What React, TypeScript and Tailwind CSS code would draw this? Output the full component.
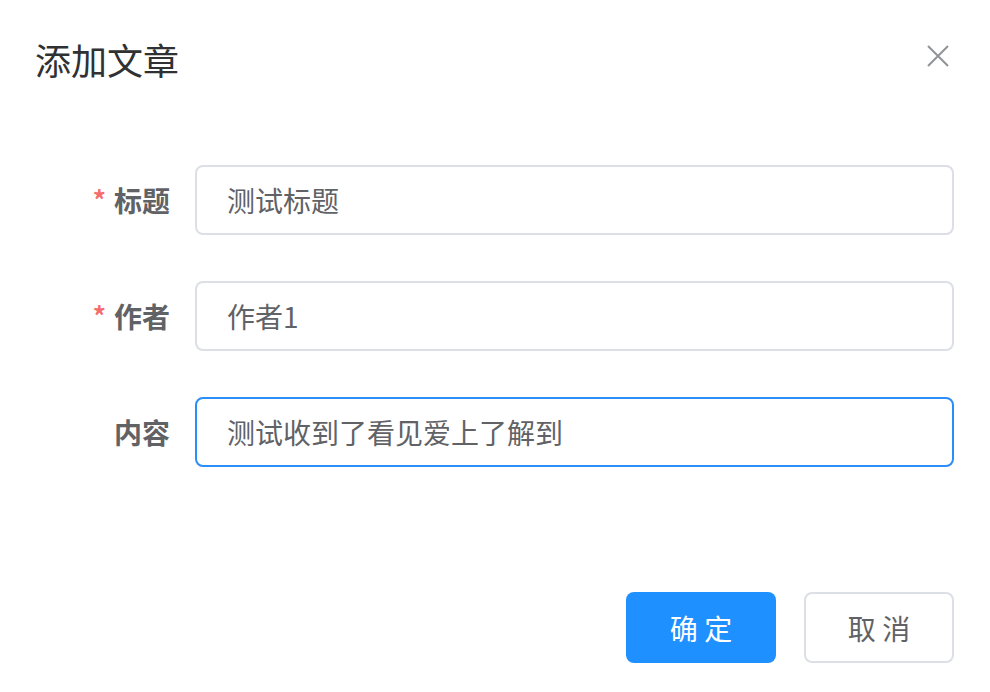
import { useState } from 'react';

const font = { fontFamily: '"Noto Sans CJK SC", "Noto Sans", sans-serif' };

interface Field {
  label: string;
  value: string;
  required?: boolean;
  focused?: boolean;
}

const fields: Field[] = [
  { label: '标题', value: '测试标题', required: true },
  { label: '作者', value: '作者1', required: true },
  { label: '内容', value: '测试收到了看见爱上了解到', focused: true },
];

const CloseIcon = () => (
  <svg width="22" height="22" viewBox="0 0 22 22" fill="none" stroke="#909399" strokeWidth="2">
    <path d="M1 1 L21 21 M21 1 L1 21" />
  </svg>
);

export default function App() {
  const [values, setValues] = useState(fields.map(f => f.value));

  return (
    <div className="w-[990px] h-[692px] bg-white flex flex-col" style={font}>
      {/* Header */}
      <div className="flex items-center justify-between pl-[35px] pr-[41px] pt-[36px] h-[82px]">
        <span className="text-[36px] leading-[46px] text-[#303133]">添加文章</span>
        <button className="mt-[-6px] flex items-center justify-center">
          <CloseIcon />
        </button>
      </div>

      {/* Form */}
      <div className="flex flex-col gap-[46px] mt-[83px] pr-[36px]">
        {fields.map((f, i) => (
          <div key={f.label} className="flex items-center">
            <label className="w-[195px] pr-[25px] flex justify-end items-center text-[28px] font-bold text-[#606266]">
              {f.required && <span className="text-[#f56c6c] text-[26px] mr-[8px] mt-[-4px]">*</span>}
              {f.label}
            </label>
            <input
              value={values[i]}
              onChange={e => setValues(v => v.map((x, j) => (j === i ? e.target.value : x)))}
              className={
                'flex-1 h-[70px] rounded-[8px] border-2 px-[30px] text-[28px] text-[#606266] outline-none ' +
                (f.focused ? 'border-[#2b8ef8]' : 'border-[#dcdfe6]')
              }
              style={font}
            />
          </div>
        ))}
      </div>

      {/* Footer */}
      <div className="flex justify-end gap-[28px] mt-[125px] pr-[36px]">
        <button className="w-[150px] h-[71px] rounded-[8px] bg-[#1e90ff] text-white text-[28px]">
          确 定
        </button>
        <button className="w-[150px] h-[71px] rounded-[8px] border-2 border-[#dcdfe6] bg-white text-[#606266] text-[28px]">
          取 消
        </button>
      </div>
    </div>
  );
}
